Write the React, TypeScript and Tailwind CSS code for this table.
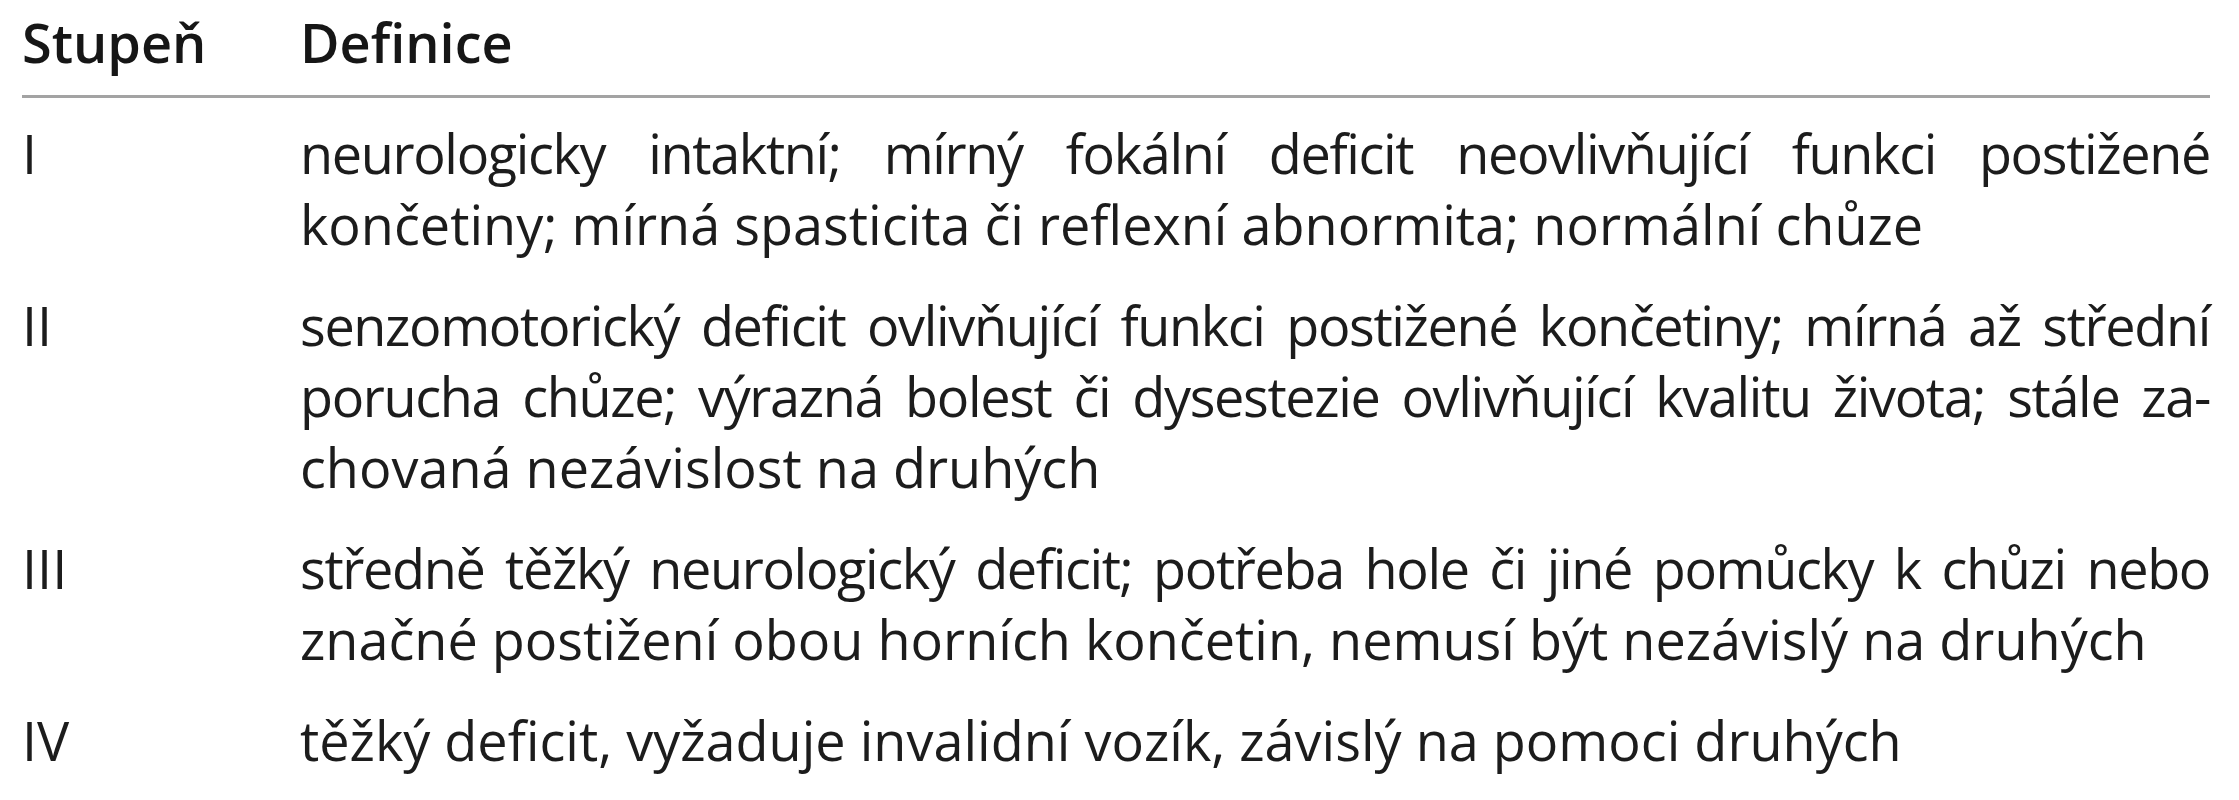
import React from "react";

type Row = {
  grade: string;
  lines: string[];
};

const rows: Row[] = [
  {
    grade: "I",
    lines: [
      "neurologicky intaktní; mírný fokální deficit neovlivňující funkci postižené",
      "končetiny; mírná spasticita či reflexní abnormita; normální chůze",
    ],
  },
  {
    grade: "II",
    lines: [
      "senzomotorický deficit ovlivňující funkci postižené končetiny; mírná až střední",
      "porucha chůze; výrazná bolest či dysestezie ovlivňující kvalitu života; stále za-",
      "chovaná nezávislost na druhých",
    ],
  },
  {
    grade: "III",
    lines: [
      "středně těžký neurologický deficit; potřeba hole či jiné pomůcky k chůzi nebo",
      "značné postižení obou horních končetin, nemusí být nezávislý na druhých",
    ],
  },
  {
    grade: "IV",
    lines: ["těžký deficit, vyžaduje invalidní vozík, závislý na pomoci druhých"],
  },
];

const App = () => {
  return (
    <div className="h-[800px] w-full overflow-hidden bg-white font-['Open_Sans',sans-serif] text-[54px] leading-[71px] text-[#1c1c1c]">
      <div className="ml-[22px] w-[2188px]">
        <div className="grid grid-cols-[278px_1fr] pt-[7px] pb-[17px] font-semibold text-[#161616]">
          <div>Stupeň</div>
          <div>Definice</div>
        </div>
        <div className="h-[3px] bg-[#a3a3a3]" />
        <div className="flex flex-col gap-[30px] pt-[20px]">
          {rows.map((row) => (
            <div key={row.grade} className="grid grid-cols-[278px_1fr]">
              <div>{row.grade}</div>
              <div>
                {row.lines.map((line, i) => (
                  <div
                    key={i}
                    className={
                      i < row.lines.length - 1
                        ? "text-justify tracking-[-0.025em] [text-align-last:justify]"
                        : "text-left"
                    }
                  >
                    {line}
                  </div>
                ))}
              </div>
            </div>
          ))}
        </div>
      </div>
    </div>
  );
};

export default App;
